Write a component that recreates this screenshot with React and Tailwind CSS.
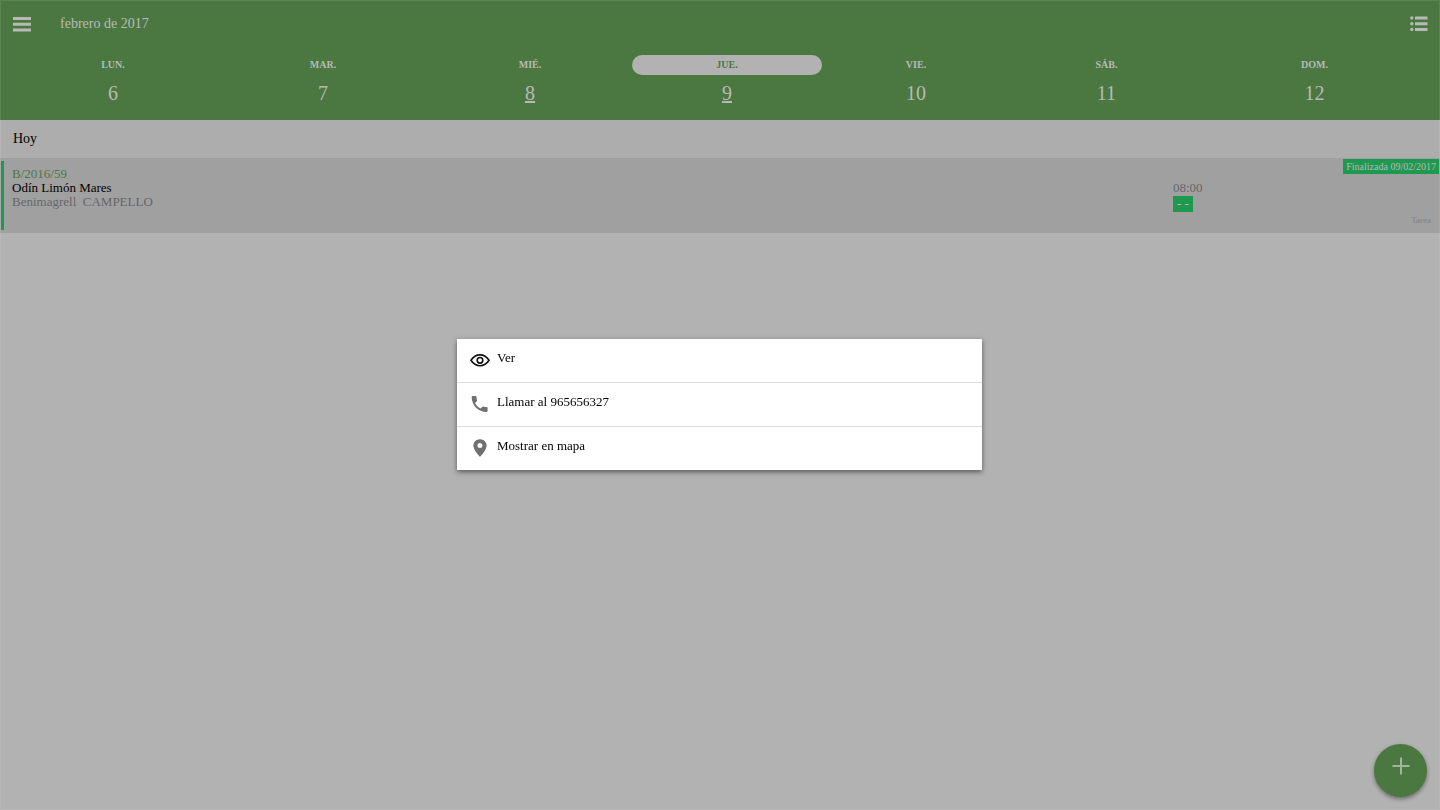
import { useState } from 'react';

const days = [
  { name: 'LUN.', number: 6 },
  { name: 'MAR.', number: 7 },
  { name: 'MIÉ.', number: 8, hasTasks: true },
  { name: 'JUE.', number: 9, hasTasks: true },
  { name: 'VIE.', number: 10 },
  { name: 'SÁB.', number: 11 },
  { name: 'DOM.', number: 12 },
];

function MenuIcon() {
  return (
    <svg width="18" height="16" viewBox="0 0 18 16" fill="currentColor" aria-hidden="true">
      <path d="M0 1h18v3H0zM0 6.8h18v3H0zM0 12.6h18v3H0z" />
    </svg>
  );
}

function ListIcon() {
  return (
    <svg width="18" height="16" viewBox="0 0 18 16" fill="currentColor" aria-hidden="true">
      <path d="M5 0.5h12.5v3H5zM5 6.2h12.5v3H5zM5 11.9h12.5v3H5z" />
      <circle cx="1.8" cy="2" r="1.7" />
      <circle cx="1.8" cy="7.7" r="1.7" />
      <circle cx="1.8" cy="13.4" r="1.7" />
    </svg>
  );
}

function PlusIcon() {
  return (
    <svg width="18" height="18" viewBox="0 0 18 18" stroke="currentColor" strokeWidth="2" aria-hidden="true">
      <path d="M9 0.5v17M0.5 9h17" />
    </svg>
  );
}

function EyeIcon() {
  return (
    <svg width="20" height="20" viewBox="0 0 20 20" fill="none" stroke="#111" strokeWidth="1.6" aria-hidden="true">
      <path d="M1 10.300C3.300 6.700 6.400 4.900 10 4.900s6.700 1.800 9 5.400c-2.300 3.600-5.400 5.400-9 5.400S3.300 13.900 1 10.300z" />
      <circle cx="10" cy="10.3" r="2.8" />
    </svg>
  );
}

function PhoneIcon() {
  return (
    <svg width="20" height="20" viewBox="-0.3 -0.8 21.500 21.500" fill="#707070" aria-hidden="true">
      <path d="M5.1 8.9c1.3 2.6 3.4 4.7 6 6l2-2c.3-.3.7-.4 1-.2 1.1.4 2.3.6 3.5.6.6 0 1 .4 1 1v3.2c0 .6-.4 1-1 1C8.600 18.500 1.500 11.400 1.500 2.400c0-.6.4-1 1-1h3.200c.6 0 1 .4 1 1 0 1.200.2 2.400.6 3.500.1.400 0 .7-.3 1z" />
    </svg>
  );
}

function PinIcon() {
  return (
    <svg width="20" height="20" viewBox="0 0 20 20" fill="#707070" fillRule="evenodd" aria-hidden="true">
      <path d="M10 1.200C6.300 1.200 3.400 4 3.400 7.600 3.400 12.300 10 19 10 19s6.600-6.700 6.600-11.400C16.600 4 13.700 1.200 10 1.200zm0 8.700a2.500 2.500 0 1 1 0-5 2.500 2.500 0 0 1 0 5z" />
    </svg>
  );
}

const actions = [
  { label: 'Ver', Icon: EyeIcon },
  { label: 'Llamar al 965656327', Icon: PhoneIcon },
  { label: 'Mostrar en mapa', Icon: PinIcon },
];

function WeekHeader({ selected, onSelect }) {
  return (
    <header className="h-[120px] bg-[#4b7840] text-[#b8b8b8]">
      <div className="flex items-center h-12 px-3">
        <button type="button" aria-label="Menú" className="p-px">
          <MenuIcon />
        </button>
        <h1 className="flex-1 ml-7 text-sm">febrero de 2017</h1>
        <button type="button" aria-label="Lista">
          <ListIcon />
        </button>
      </div>
      <div className="grid grid-cols-[210fr_210fr_204fr_190fr_188fr_193fr_223fr] pl-2 pr-[14px] pt-[7px]">
        {days.map((day) => (
          <button key={day.number} type="button" onClick={() => onSelect(day.number)} className="flex flex-col items-center">
            <span
              className={`w-full h-5 rounded-full text-[10px] leading-5 font-bold ${
                day.number === selected ? 'bg-[#b2b2b2] text-[#4b7840]' : ''
              }`}
            >
              {day.name}
            </span>
            <span className={`mt-1.5 text-xl leading-6 ${day.hasTasks ? 'underline' : ''}`}>{day.number}</span>
          </button>
        ))}
      </div>
    </header>
  );
}

function TaskRow() {
  return (
    <article className="flex h-[75px] bg-[#a0a0a0] px-px">
      <div className="w-[3px] my-[3px] bg-[#1f9850]"></div>
      <div className="flex-1 pl-2 pt-[9px] text-[13px] leading-[14px]">
        <p className="text-[#4b7840]">B/2016/59</p>
        <p className="text-black">Odín Limón Mares</p>
        <p className="text-[#666] whitespace-pre">Benimagrell  CAMPELLO</p>
      </div>
      <div className="flex flex-col items-start w-[170px] pt-[22px] text-[13px] leading-4">
        <time className="text-[#666]">08:00</time>
        <span className="px-1 bg-[#1f9850] text-[#b8b8b8]">- -</span>
      </div>
      <div className="flex flex-col items-end justify-between w-24 pt-px pb-[7px]">
        <span className="px-[3px] bg-[#1f9850] text-[10px] leading-[15px] text-[#b8b8b8] whitespace-nowrap">
          Finalizada 09/02/2017
        </span>
        <span className="pr-2 text-[9px] leading-3 text-[#808080]">Tarea</span>
      </div>
    </article>
  );
}

export default function App() {
  const [selected, setSelected] = useState(9);

  return (
    <div className="relative min-h-screen bg-[#b2b2b2] font-['Liberation_Serif',serif]">
      <WeekHeader selected={selected} onSelect={setSelected} />
      <main>
        <h2 className="h-[38px] px-[13px] bg-[#adadad] text-sm leading-[38px] text-black">Hoy</h2>
        <TaskRow />
      </main>

      <button
        type="button"
        aria-label="Añadir"
        className="fixed right-[13px] bottom-[13px] flex items-center justify-center size-[53px] pb-[9px] rounded-full bg-[#4b7840] text-[#a3b39f] shadow-[0_2px_4px_rgba(0,0,0,0.4)]"
      >
        <PlusIcon />
      </button>

      {/* task actions */}
      <div className="fixed inset-0 flex items-center justify-center pr-px pb-px border border-white/10">
        <div
          role="dialog"
          aria-label="Acciones"
          className="w-[525px] max-w-full bg-white divide-y divide-[#dcdcdc] shadow-[0_2px_5px_rgba(0,0,0,0.5)]"
        >
          {actions.map(({ label, Icon }) => (
            <button key={label} type="button" className="flex w-full h-[44px] pl-[13px] pt-[11px] text-left last:h-[43px]">
              <Icon />
              <span className="ml-[7px] text-[13px] leading-4 text-black">{label}</span>
            </button>
          ))}
        </div>
      </div>
    </div>
  );
}
